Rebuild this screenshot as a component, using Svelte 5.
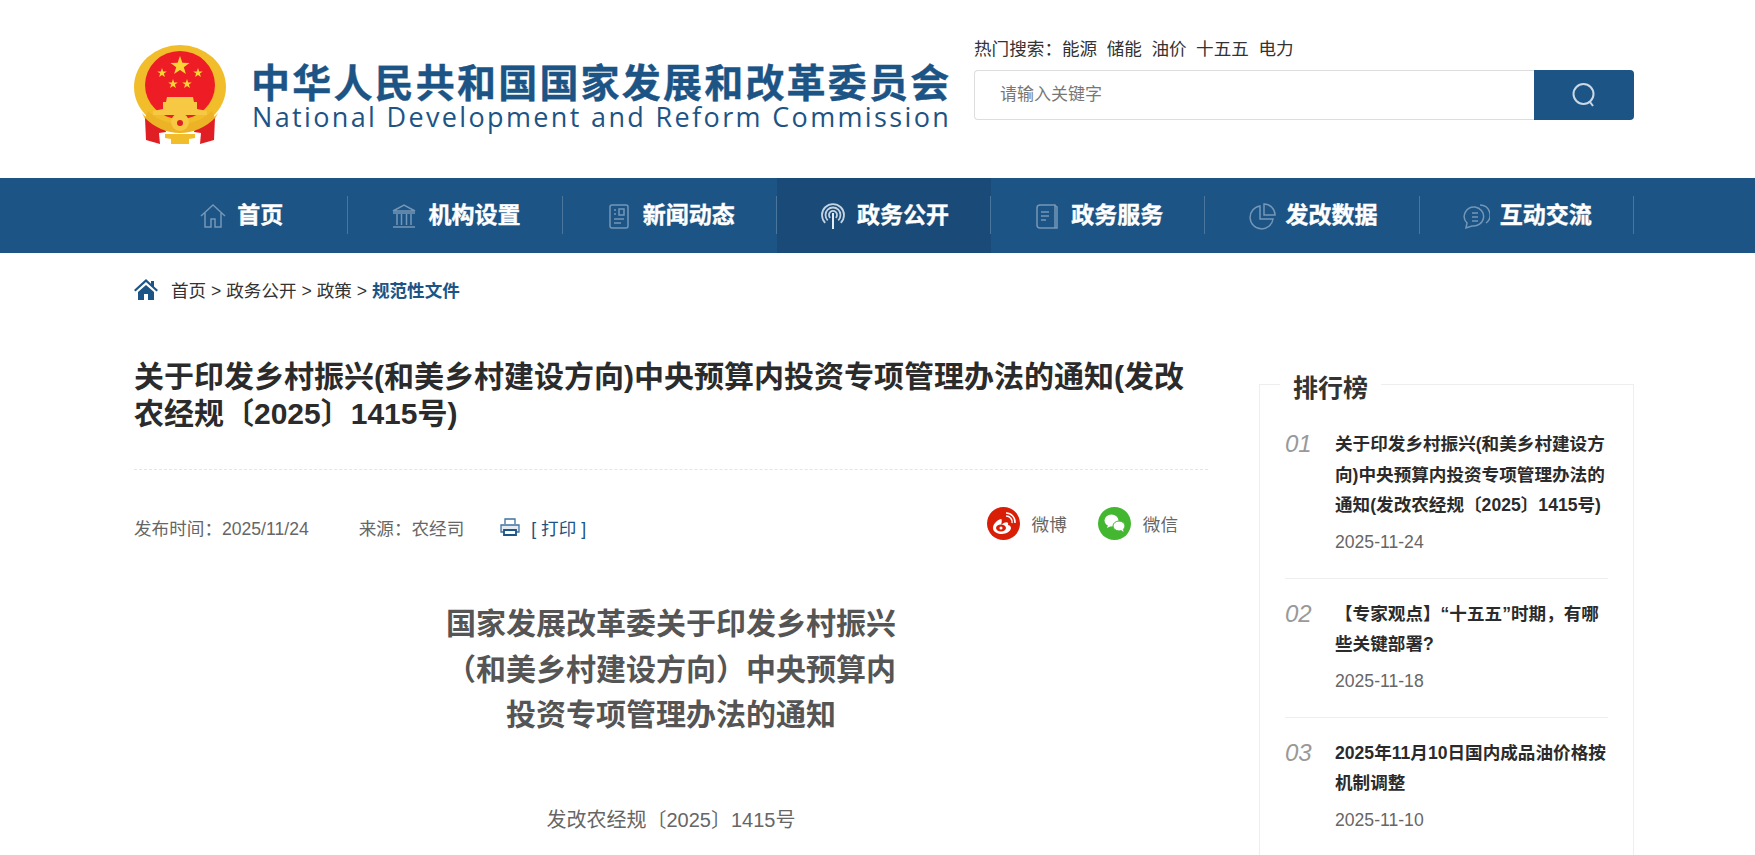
<script>
  const hotWords = ['能源', '储能', '油价', '十五五', '电力'];

  const navItems = [
    { label: '首页', icon: 'home' },
    { label: '机构设置', icon: 'bank' },
    { label: '新闻动态', icon: 'news' },
    { label: '政务公开', icon: 'signal', active: true },
    { label: '政务服务', icon: 'book' },
    { label: '发改数据', icon: 'pie' },
    { label: '互动交流', icon: 'chat' }
  ];

  const ranking = [
    { no: '01', title: '关于印发乡村振兴(和美乡村建设方向)中央预算内投资专项管理办法的通知(发改农经规〔2025〕1415号)', date: '2025-11-24' },
    { no: '02', title: '【专家观点】“十五五”时期，有哪些关键部署?', date: '2025-11-18' },
    { no: '03', title: '2025年11月10日国内成品油价格按机制调整', date: '2025-11-10' }
  ];

  const stars = [
    { x: 46, y: 21, r: 10 },
    { x: 28, y: 28, r: 5 },
    { x: 64, y: 28, r: 5 },
    { x: 39, y: 39, r: 5 },
    { x: 53, y: 39, r: 5 }
  ];

  function starPoints(cx, cy, r) {
    const pts = [];
    for (let i = 0; i < 10; i++) {
      const rad = i % 2 ? r * 0.4 : r;
      const a = -Math.PI / 2 + (i * Math.PI) / 5;
      pts.push(`${(cx + rad * Math.cos(a)).toFixed(1)},${(cy + rad * Math.sin(a)).toFixed(1)}`);
    }
    return pts.join(' ');
  }
</script>

<div class="page">
  <header class="top wrap">
    <div class="logo">
      <svg class="emblem" viewBox="0 0 92 100" width="92" height="100">
        <ellipse cx="46" cy="42" rx="46" ry="42" fill="#f1bd2b" />
        <path d="M8 68l14 14-6 2z M84 68L70 82l6 2z" fill="#f1bd2b" />
        <ellipse cx="46" cy="40" rx="35" ry="34" fill="#ee1c25" />
        {#each stars as s}
          <polygon points={starPoints(s.x, s.y, s.r)} fill="#fbd535" />
        {/each}
        <path d="M33 52h26l1 5h3v7l10 2v4H19v-4l10-2v-7h3z" fill="#f7c843" />
        <path d="M11 73l19 6 2 8-7 1 1 11-14-4z M81 73l-19 6-2 8 7 1-1 11 14-4z" fill="#e01f24" />
        <path d="M14 66c8 8 20 13 32 13s24-5 32-13l3 7c-9 9-22 15-35 15S20 82 11 73z" fill="#edb326" />
        <circle cx="46" cy="77" r="9" fill="#f7c843" />
        <circle cx="46" cy="78" r="3" fill="#e01f24" />
        <path d="M31 89h30v4l-6 1v5H37v-5l-6-1z" fill="#f1bd2b" />
      </svg>
      <div class="wordmark">
        <div class="cn">中华人民共和国国家发展和改革委员会</div>
        <div class="en">National Development and Reform Commission</div>
      </div>
    </div>
    <div class="search-area">
      <div class="hot">
        <span>热门搜索：</span>
        {#each hotWords as word}
          <span class="hot-word">{word}</span>
        {/each}
      </div>
      <div class="search">
        <input type="text" placeholder="请输入关键字" />
        <button aria-label="搜索">
          <svg viewBox="0 0 26 26" width="26" height="26" fill="none" stroke="#c9d8e6" stroke-width="2">
            <circle cx="12.5" cy="12" r="10" />
            <path d="M19 20l3 4" />
          </svg>
        </button>
      </div>
    </div>
  </header>

  <nav class="nav">
    <ul class="wrap">
      {#each navItems as item}
        <li class:active={item.active}>
          <svg viewBox="0 0 28 28" width="28" height="28" fill="none" stroke="#7497b7" stroke-width="1.5">
            {#if item.icon === 'home'}
              <path d="M2 14L14 3l12 11M6 11v14h6v-8h4v8h6V11" />
            {:else if item.icon === 'bank'}
              <path d="M3 9L14 3l11 6zM3 11h22M7 12v11M11.500 12v11M16.500 12v11M21 12v11M3 25h22" />
            {:else if item.icon === 'news'}
              <rect x="5" y="3" width="18" height="23" rx="2" />
              <path d="M9 8h2M9 12h2M9 17h10M9 21h7" />
              <rect x="14" y="7" width="5" height="6" />
            {:else if item.icon === 'signal'}
              <path d="M14 11v16" stroke="#e3ebf2" stroke-width="2" />
              <path d="M11.200 15.800A4 4 0 1 1 16.800 15.800M8.700 18.300A7.500 7.500 0 1 1 19.300 18.300M6.200 20.800A11 11 0 1 1 21.800 20.800" stroke="#c4d3e1" stroke-width="1.800" />
            {:else if item.icon === 'book'}
              <path d="M7 3h15v23H7a3 3 0 0 1-3-3V6a3 3 0 0 1 3-3zM21 3l3 2v21h-3" />
              <path d="M8 10h8M8 14h8M8 18h5" />
            {:else if item.icon === 'pie'}
              <path d="M12 4a11.500 11.500 0 1 0 13 13H12z" />
              <path d="M16 2v11h11A11 11 0 0 0 16 2z" />
            {:else}
              <path d="M13 5a10 9.500 0 0 0-8 16l-1 5 6-2a10 9.500 0 1 0 3-19z" />
              <path d="M18 3a10 10 0 0 1 6 18" />
              <path d="M10 11h6M10 15h6M10 19h6" />
            {/if}
          </svg>
          <span>{item.label}</span>
        </li>
      {/each}
    </ul>
  </nav>

  <div class="crumbs wrap">
    <svg viewBox="0 0 24 22" width="24" height="22" fill="#1c5485">
      <path d="M12 1L0 12l1.500 1.500L12 4l10.500 9.500L24 12l-4-3.600V3h-3v2.700z" />
      <path d="M4 14l8-7 8 7v8h-6v-6h-4v6H4z" />
    </svg>
    <span>首页 &gt; 政务公开 &gt; 政策 &gt; <b>规范性文件</b></span>
  </div>

  <div class="body wrap">
    <main class="article">
      <h1>关于印发乡村振兴(和美乡村建设方向)中央预算内投资专项管理办法的通知(发改农经规〔2025〕1415号)</h1>
      <div class="meta">
        <span class="time">发布时间：2025/11/24</span>
        <span class="source">来源：农经司</span>
        <span class="print">
          <svg viewBox="0 0 20 18" width="20" height="18" fill="none" stroke="#3f719d" stroke-width="1.300">
            <path d="M5 6V1h10v5" />
            <path d="M1 7h18v7H1z" fill="#e4ebf2" />
            <path d="M4 12h12v5H4z" fill="#fff" stroke="#1c5485" stroke-width="1.800" />
          </svg>
          [ 打印 ]
        </span>
        <span class="share">
          <span class="share-item">
            <svg viewBox="0 0 33 33" width="33" height="33">
              <circle cx="16.500" cy="16.500" r="16.500" fill="#d81e06" />
              <path d="M14 12c-4 1-8 5-8 9 0 4 5 6 9 6s9-3 9-6c0-2-2-3-3-3 1-3-2-4-7 0 1-3 1-6 0-6z" fill="#fff" />
              <ellipse cx="14" cy="21" rx="5" ry="3.500" fill="#d81e06" />
              <circle cx="14" cy="21" r="1.500" fill="#fff" />
              <path d="M19 9a6 6 0 0 1 6 7M19 6a9 9 0 0 1 9 10" fill="none" stroke="#fff" stroke-width="1.500" />
            </svg>
            微博
          </span>
          <span class="share-item">
            <svg viewBox="0 0 33 33" width="33" height="33" fill="#fff">
              <circle cx="16.500" cy="16.500" r="16.500" fill="#43b730" />
              <ellipse cx="13.500" cy="13.500" rx="7" ry="6" />
              <path d="M10 18l-1 3 4-2z" />
              <ellipse cx="21" cy="19" rx="6" ry="5" stroke="#43b730" />
              <path d="M23 23l2.500 2-.5-3z" />
            </svg>
            微信
          </span>
        </span>
      </div>
      <h2>国家发展改革委关于印发乡村振兴<br />（和美乡村建设方向）中央预算内<br />投资专项管理办法的通知</h2>
      <p class="doc-no">发改农经规〔2025〕1415号</p>
    </main>

    <aside class="rank">
      <div class="rank-title">排行榜</div>
      {#each ranking as item}
        <div class="rank-item">
          <span class="no">{item.no}</span>
          <div class="rank-text">
            <div class="rank-name">{item.title}</div>
            <div class="rank-date">{item.date}</div>
          </div>
        </div>
      {/each}
    </aside>
  </div>
</div>

<style>
  :global(body) {
    overflow: hidden;
    background: #fff;
  }

  .page {
    height: 855px;
    overflow: hidden;
    font-family: "Liberation Sans", "Noto Sans CJK SC", sans-serif;
    color: #333;
  }

  .wrap {
    width: 1500px;
    margin-left: 134px;
    box-sizing: border-box;
  }

  .top {
    height: 178px;
    display: flex;
    justify-content: space-between;
  }

  .logo {
    display: flex;
    padding-top: 45px;
  }

  .emblem {
    flex: none;
  }

  .wordmark {
    margin-left: 25px;
    padding-top: 19px;
    color: #1c5485;
    white-space: nowrap;
  }

  .cn {
    font-size: 39px;
    font-weight: 700;
    line-height: 40px;
    letter-spacing: 2.200px;
    -webkit-text-stroke: 0.4px #1c5485;
  }

  .en {
    font-family: "Open Sans", sans-serif;
    font-size: 27px;
    line-height: 25px;
    letter-spacing: 2.350px;
    margin-left: 1px;
  }

  .search-area {
    width: 660px;
    padding-top: 37px;
  }

  .hot {
    display: flex;
    height: 24px;
    font-size: 17.600px;
    line-height: 24px;
    margin-bottom: 9px;
  }

  .hot-word {
    margin-right: 9.500px;
  }

  .search {
    display: flex;
    height: 50px;
  }

  input {
    flex: 1;
    min-width: 0;
    box-sizing: border-box;
    border: 1px solid #ddd;
    border-right: none;
    border-radius: 4px 0 0 4px;
    padding: 0 25px;
    font: 17px "Liberation Sans", "Noto Sans CJK SC", sans-serif;
    outline: none;
  }

  input::placeholder {
    color: #777;
  }

  button {
    width: 100px;
    border: none;
    padding: 0;
    border-radius: 0 4px 4px 0;
    background: #1c5485;
    display: flex;
    align-items: center;
    justify-content: center;
  }

  .nav {
    height: 75px;
    background: #1c5485;
  }

  .nav ul {
    list-style: none;
    padding: 0;
    margin-top: 0;
    margin-bottom: 0;
    display: flex;
    height: 75px;
  }

  .nav li {
    position: relative;
    flex: 1;
    display: flex;
    align-items: center;
    justify-content: center;
    gap: 10px;
    color: #fff;
    font-size: 23px;
    font-weight: 700;
    -webkit-text-stroke: 0.4px #fff;
  }

  .nav li span {
    padding-bottom: 6px;
  }

  .nav li::after {
    content: '';
    position: absolute;
    right: 0;
    top: 18px;
    height: 38px;
    width: 1px;
    background: #4a769d;
  }

  .nav li.active {
    background: #194a78;
  }

  .crumbs {
    display: flex;
    align-items: center;
    gap: 13px;
    height: 26px;
    margin-top: 23px;
    font-size: 17.600px;
  }

  .crumbs b {
    color: #1c5485;
  }

  .body {
    display: flex;
    justify-content: space-between;
    margin-top: 56px;
  }

  .article {
    width: 1074px;
  }

  h1 {
    margin: 0;
    padding-bottom: 37px;
    border-bottom: 1px dashed #e5e5e5;
    font-size: 30px;
    line-height: 37px;
    color: #2b2b2b;
  }

  .meta {
    display: flex;
    align-items: center;
    height: 34px;
    margin-top: 40px;
    font-size: 17.600px;
    color: #666;
  }

  .source {
    margin-left: 50px;
  }

  .print {
    display: flex;
    align-items: center;
    gap: 11px;
    margin-left: 36px;
    color: #1c5485;
  }

  .share {
    display: flex;
    gap: 31px;
    margin-left: auto;
    margin-right: 30px;
    position: relative;
    top: -4px;
  }

  .share-item {
    display: flex;
    align-items: center;
    gap: 12px;
  }

  h2 {
    width: 460px;
    margin: 57px auto 0;
    font-size: 30px;
    line-height: 45.500px;
    text-align: center;
    color: #555;
  }

  .doc-no {
    margin: 68px 0 0;
    font-size: 20px;
    line-height: 28px;
    text-align: center;
    color: #666;
  }

  .rank {
    position: relative;
    width: 375px;
    height: 520px;
    margin-top: 26px;
    box-sizing: border-box;
    border: 1px solid #eee;
    padding: 44px 25px 0 25px;
  }

  .rank-title {
    position: absolute;
    left: 20px;
    top: -14px;
    padding: 0 13px 0 13px;
    background: #fff;
    font-size: 25px;
    font-weight: 700;
    line-height: 34px;
  }

  .rank-item {
    display: flex;
    padding-bottom: 21px;
    margin-bottom: 20px;
    border-bottom: 1px solid #eee;
  }

  .no {
    width: 50px;
    flex: none;
    font-size: 24px;
    font-style: italic;
    line-height: 30px;
    color: #999;
  }

  .rank-name {
    font-size: 17.600px;
    font-weight: 700;
    line-height: 30.500px;
    color: #2b2b2b;
  }

  .rank-date {
    margin-top: 6px;
    font-size: 17.600px;
    line-height: 30px;
    color: #666;
  }
</style>
